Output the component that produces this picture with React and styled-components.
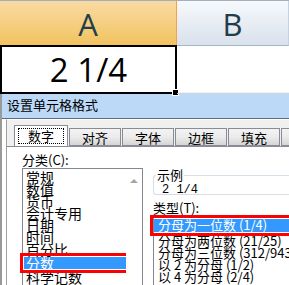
import React from 'react'
import styled, { createGlobalStyle } from 'styled-components'

const GlobalStyle = createGlobalStyle`
  html, body {
    margin: 0;
    padding: 0;
    background: #ffffff;
  }
  body {
    font-family: "Noto Sans CJK SC", "Liberation Sans", sans-serif;
  }
`

const categories = ['常规', '数值', '货币', '会计专用', '日期', '时间', '百分比', '分数', '科学记数']
const types = [
  '分母为一位数 (1/4)',
  '分母为两位数 (21/25)',
  '分母为三位数 (312/943)',
  '以 2 为分母 (1/2)',
  '以 4 为分母 (2/4)',
]
const tabs = ['数字', '对齐', '字体', '边框', '填充']

function App() {
  return (
    <Screen>
      <GlobalStyle />
      <Sheet>
        <HeaderRow>
          <ColHeader active>A</ColHeader>
          <ColHeader>B</ColHeader>
        </HeaderRow>
        <CellRow>
          <Cell selected>
            2 1/4
            <FillHandle />
          </Cell>
          <Cell />
        </CellRow>
      </Sheet>
      <Shadow />
      <Dialog>
        <TitleBar>设置单元格格式</TitleBar>
        <Body>
          <TabStrip>
            {tabs.map((t, i) => (
              <Tab key={t} active={i === 0}>
                {i === 0 ? <Focus>{t}</Focus> : t}
              </Tab>
            ))}
            <Tab />
          </TabStrip>
          <Pane>
            <Column>
              <Label>分类(C):</Label>
              <ListBox>
                <Items>
                  {categories.map((c) => (
                    <Item key={c} selected={c === '分数'}>{c}</Item>
                  ))}
                </Items>
                <ScrollBar>
                  <Arrow />
                </ScrollBar>
              </ListBox>
            </Column>
            <Column>
              <Group>
                <Legend>示例</Legend>
                <Sample>2 1/4</Sample>
              </Group>
              <Label>类型(T):</Label>
              <TypeList>
                {types.map((t, i) => (
                  <TypeItem key={t} selected={i === 0}>{t}</TypeItem>
                ))}
              </TypeList>
            </Column>
          </Pane>
        </Body>
      </Dialog>
    </Screen>
  )
}

export default App

const Screen = styled.div`
  width: 289px;
  height: 285px;
  overflow: hidden;
  display: flex;
  flex-direction: column;
  background: #ffffff;
`
const Sheet = styled.div`
  border-top: 1px solid #a3afbd;
`
const HeaderRow = styled.div`
  display: grid;
  grid-template-columns: 177px 1fr;
  height: 44px;
`
const ColHeader = styled.div`
  display: flex;
  align-items: center;
  justify-content: center;
  font-family: "Open Sans", "Liberation Sans", sans-serif;
  font-size: 31px;
  color: #233e4b;
  background: ${(p) => (p.active ? 'linear-gradient(#f9dba3, #f1c25f)' : 'linear-gradient(#f7f9fc, #d9e1eb)')};
  border-right: 1px solid ${(p) => (p.active ? '#f2a24a' : '#c5d1de')};
  border-bottom: 1px solid ${(p) => (p.active ? '#f29a3a' : '#9eb6ce')};
  box-sizing: border-box;
  padding-top: 2px;
`
const CellRow = styled.div`
  display: grid;
  grid-template-columns: 177px 1fr;
  height: 47px;
`
const Cell = styled.div`
  position: relative;
  display: flex;
  align-items: center;
  justify-content: center;
  font-family: "Open Sans", "Liberation Sans", sans-serif;
  font-size: 33px;
  color: #000000;
  box-sizing: border-box;
  border: ${(p) => (p.selected ? '2px solid #000000' : 'none')};
  border-bottom: ${(p) => (p.selected ? '2px solid #000000' : '1px solid #d4d4d4')};
`
const FillHandle = styled.span`
  position: absolute;
  right: -4px;
  bottom: -4px;
  width: 5px;
  height: 5px;
  background: #000000;
  border: 1px solid #ffffff;
`
const Shadow = styled.div`
  height: 4px;
  background: linear-gradient(#7d7d7d, #d6d6d6);
`
const Dialog = styled.div`
  flex: 1;
  display: flex;
  flex-direction: column;
  border-left: 2px solid #9a9a9a;
`
const TitleBar = styled.div`
  height: 25px;
  background: #bcdaf7;
  border-top: 1px solid #e9f3fd;
  border-bottom: 1px solid #5f6b78;
  font-size: 13px;
  line-height: 24px;
  padding-left: 5px;
  color: #000000;
`
const Body = styled.div`
  flex: 1;
  display: flex;
  flex-direction: column;
  background: #f0f0f0;
  margin-left: 4px;
  border-left: 1px solid #a0a0a0;
  border-top: 1px solid #ffffff;
  padding-top: 5px;
`
const TabStrip = styled.div`
  display: flex;
  align-items: flex-end;
  padding-left: 7px;
  height: 21px;
`
const Tab = styled.div`
  width: ${(p) => (p.active ? '54px' : '52px')};
  height: ${(p) => (p.active ? '21px' : '18px')};
  box-sizing: border-box;
  display: flex;
  align-items: center;
  justify-content: center;
  font-size: 13px;
  color: #000000;
  border: 1px solid #898c95;
  border-bottom: ${(p) => (p.active ? 'none' : '1px solid #898c95')};
  margin-right: 1px;
  background: ${(p) => (p.active ? '#ffffff' : 'linear-gradient(#f3f3f3, #ebebeb 50%, #d5d5d5)')};
  flex-shrink: 0;
`
const Focus = styled.span`
  border: 1px dotted #000000;
  padding: 0 9px;
  line-height: 14px;
`
const Pane = styled.div`
  flex: 1;
  background: #ffffff;
  border-top: 1px solid #898c95;
  display: grid;
  grid-template-columns: 121px 1fr;
  column-gap: 10px;
  padding-left: 15px;
`
const Column = styled.div`
  display: flex;
  flex-direction: column;
`
const Label = styled.div`
  font-size: 13px;
  line-height: 16px;
  margin-top: 5px;
  color: #000000;
`
const ListBox = styled.div`
  display: flex;
  border: 1px solid #828790;
  border-bottom: none;
  height: 120px;
  box-sizing: border-box;
`
const Items = styled.div`
  flex: 1;
  padding-top: 2px;
  padding-left: 1px;
`
const Item = styled.div`
  font-size: 14px;
  line-height: 12px;
  height: 12px;
  padding-left: 2px;
  margin: ${(p) => (p.selected ? '2px 0 2px' : '0')};
  color: ${(p) => (p.selected ? '#ffffff' : '#000000')};
  background: ${(p) => (p.selected ? '#3399ff' : 'transparent')};
  outline: ${(p) => (p.selected ? '3px solid #ff0000' : 'none')};
  outline-offset: 1px;
`
const ScrollBar = styled.div`
  width: 16px;
  background: #ffffff;
  display: flex;
  justify-content: center;
  padding-top: 10px;
`
const Arrow = styled.div`
  width: 0;
  height: 0;
  border-left: 4px solid transparent;
  border-right: 4px solid transparent;
  border-bottom: 4px solid #a6a6a6;
`
const Group = styled.fieldset`
  margin: 21px 0 0 0;
  padding: 0 0 1px 8px;
  border: 1px solid #d5dfe5;
  border-right: none;
  border-radius: 3px 0 0 3px;
  height: 27px;
  box-sizing: border-box;
  position: relative;
`
const Legend = styled.legend`
  font-size: 13px;
  padding: 0 1px;
  margin-left: -6px;
  line-height: 14px;
`
const Sample = styled.div`
  font-family: "Liberation Mono", monospace;
  font-size: 12px;
  line-height: 12px;
  margin-top: 2px;
`
const TypeList = styled.div`
  border: 1px solid #828790;
  border-right: none;
  border-bottom: none;
  flex: 1;
  padding-top: 2px;
`
const TypeItem = styled.div`
  font-size: 13px;
  line-height: 12px;
  height: ${(p) => (p.selected ? '13px' : '12px')};
  padding-left: 4px;
  margin-bottom: ${(p) => (p.selected ? '3px' : '0')};
  white-space: nowrap;
  color: ${(p) => (p.selected ? '#ffffff' : '#000000')};
  background: ${(p) => (p.selected ? '#3399ff' : 'transparent')};
  outline: ${(p) => (p.selected ? '3px solid #ff0000' : 'none')};
  outline-offset: 1px;
`
